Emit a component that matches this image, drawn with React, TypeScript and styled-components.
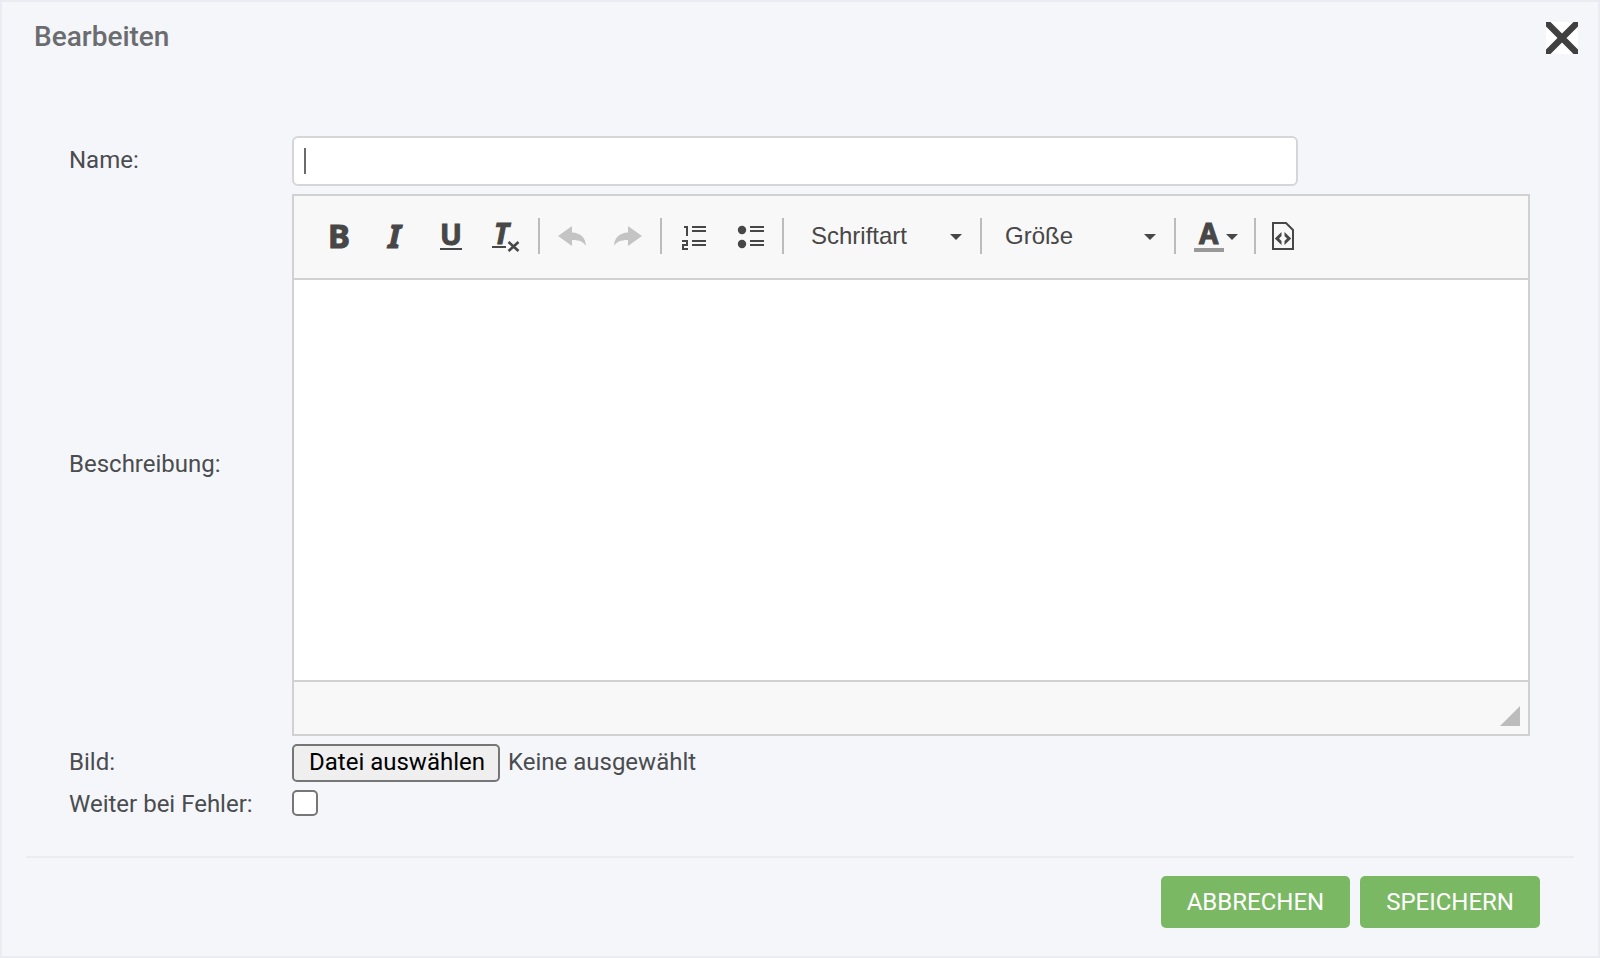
import React from "react";
import styled, { createGlobalStyle } from "styled-components";

const GlobalStyle = createGlobalStyle`
  *, *::before, *::after { box-sizing: border-box; }
  body { margin: 0; background: #f4f6fa; }
  body, button, input, textarea { font-family: Roboto, "Liberation Sans", sans-serif; }
`;

const Dialog = styled.form`
  display: flex;
  flex-direction: column;
  min-height: 100vh;
  padding: 0 24px 28px;
  border: 2px solid #ebecf1;
  background: #f4f6fa;
  color: #4b4c4f;
  font-size: 24px;
  line-height: 28px;
`;

const Header = styled.header`
  display: flex;
  justify-content: space-between;
  align-items: flex-start;
  padding: 20px 0 0 8px;
  margin-right: -4px;
`;

const Title = styled.h1`
  margin: 0;
  color: #6b6c6f;
  font-size: 28px;
  line-height: 30px;
  font-weight: 500;
`;

const CloseButton = styled.button`
  display: block;
  width: 32px;
  height: 32px;
  padding: 0;
  border: 0;
  background: #fff;
  cursor: pointer;
`;

const Fields = styled.div`
  display: grid;
  grid-template-columns: 223px minmax(0, 1fr);
  row-gap: 8px;
  align-items: center;
  padding: 82px 44px 36px 43px;
`;

const Label = styled.label`
  padding-bottom: 2px;
`;

const NameBox = styled.div`
  position: relative;
  width: calc(100% - 232px);
  height: 50px;
`;

const NameInput = styled.input`
  display: block;
  width: 100%;
  height: 100%;
  padding: 0 10px;
  border: 2px solid #d6d6d8;
  border-radius: 6px;
  background: #fff;
  color: #4b4c4f;
  font-size: 24px;
  outline: none;
`;

const Caret = styled.span`
  position: absolute;
  left: 12px;
  top: 12px;
  width: 2px;
  height: 26px;
  background: #6b6b6b;
  pointer-events: none;
`;

const Editor = styled.div`
  border: 2px solid #d1d1d1;
  background: #fff;
`;

const Toolbar = styled.div`
  display: flex;
  align-items: center;
  padding: 22px 16px 24px;
  border-bottom: 2px solid #d1d1d1;
  background: #f8f8f8;
`;

const ToolButton = styled.button<{ $pad?: number }>`
  display: block;
  height: 36px;
  padding: 0 ${(p) => p.$pad ?? 12}px;
  border: 0;
  background: none;
  color: #474747;
  cursor: pointer;

  &:disabled { color: #c4c4c4; cursor: default; }
  svg { display: block; overflow: visible; }
`;

const Separator = styled.span`
  width: 2px;
  height: 36px;
  margin: 0 4px;
  background: #bcbcbc;
`;

const Combo = styled.span<{ $width: number }>`
  display: grid;
  align-items: center;
  width: ${(p) => p.$width}px;
  color: #474747;

  > * { grid-area: 1 / 1; }
  svg { justify-self: end; margin: 2px 14px 0 0; pointer-events: none; }
`;

const ComboSelect = styled.select<{ $indent: number }>`
  width: 100%;
  height: 36px;
  padding: 0 32px 2px ${(p) => p.$indent}px;
  border: 0;
  appearance: none;
  background: none;
  color: #474747;
  font-family: "Liberation Sans", Arial, sans-serif;
  font-size: 24px;
`;

const TextArea = styled.textarea`
  display: block;
  width: 100%;
  height: 400px;
  padding: 20px;
  border: 0;
  outline: none;
  resize: none;
  background: #fff;
  color: #333;
  font-size: 24px;
`;

const StatusBar = styled.div`
  display: flex;
  justify-content: flex-end;
  align-items: flex-end;
  height: 54px;
  padding: 8px;
  border-top: 2px solid #d1d1d1;
  background: #f8f8f8;
  svg { display: block; }
`;

const FilePicker = styled.div`
  position: relative;
  display: flex;
  align-items: center;
  gap: 8px;
`;

const FileInput = styled.input`
  position: absolute;
  width: 1px;
  height: 1px;
  opacity: 0;
`;

const FileButton = styled.label`
  height: 38px;
  padding: 2px 13px 4px 15px;
  border: 2px solid #767676;
  border-radius: 5px;
  background: #efefef;
  color: #000;
  cursor: pointer;
`;

const FileName = styled.span`
  padding-bottom: 2px;
`;

const Checkbox = styled.input`
  display: block;
  align-self: start;
  width: 26px;
  height: 26px;
  margin: 0;
  border: 2px solid #767676;
  border-radius: 5px;
  appearance: none;
  background: #fff;

  &:checked { background: #7bb864; }
`;

const Footer = styled.footer`
  display: flex;
  justify-content: flex-end;
  gap: 10px;
  padding: 18px 34px 0 0;
  border-top: 2px solid #ebecf1;
`;

const ActionButton = styled.button`
  height: 52px;
  padding: 0 26px;
  border: 0;
  border-radius: 5px;
  background: #7bb864;
  color: #fff;
  font-size: 24px;
  line-height: 28px;
  text-transform: uppercase;
  cursor: pointer;
`;

const IconLetter = styled.text`
  font-family: "Noto Sans", "Open Sans", sans-serif;
  font-weight: 700;
  fill: currentColor;
  stroke: currentColor;
  stroke-width: 1px;
`;

function Icon({ width = 32, children }: { width?: number; children: React.ReactNode }) {
  return (
    <svg width={width} height="32" viewBox={`0 0 ${width} 32`} fill="currentColor" aria-hidden="true">
      {children}
    </svg>
  );
}

const UNDO_PATH = "M2 16 16 6v6.6C24.5 13 30 18 29.8 26 27.5 22 24 20 16 20v6Z";
const LIST_LINES = "h14v2h-14z";

function DropArrow() {
  return (
    <svg width="12" height="6" viewBox="0 0 12 6" fill="currentColor" aria-hidden="true">
      <path d="M0 0h12L6 6Z" />
    </svg>
  );
}

function FormatCombo(props: { label: string; width: number; indent: number }) {
  return (
    <Combo $width={props.width}>
      <ComboSelect $indent={props.indent} aria-label={props.label}>
        <option>{props.label}</option>
      </ComboSelect>
      <DropArrow />
    </Combo>
  );
}

function EditorToolbar() {
  return (
    <Toolbar role="toolbar" aria-label="Formatierung">
      <ToolButton type="button" aria-label="Fett">
        <Icon><IconLetter x="6" y="28" fontSize="33">B</IconLetter></Icon>
      </ToolButton>
      <ToolButton type="button" aria-label="Kursiv">
        <Icon><IconLetter x="10" y="28" fontSize="33" fontStyle="italic">I</IconLetter></Icon>
      </ToolButton>
      <ToolButton type="button" aria-label="Unterstrichen">
        <Icon>
          <IconLetter x="6" y="25" fontSize="29">U</IconLetter>
          <path d="M6 28h22v2H6z" />
        </Icon>
      </ToolButton>
      <ToolButton type="button" aria-label="Formatierung entfernen">
        <Icon>
          <IconLetter x="4" y="24" fontSize="28" fontStyle="italic">T</IconLetter>
          <path d="M2 26h14v2H2z" />
          <path d="m18.5 22 10 9m0-9-10 9" stroke="currentColor" strokeWidth="2.6" />
        </Icon>
      </ToolButton>
      <Separator />
      <ToolButton type="button" aria-label="Rückgängig" disabled>
        <Icon><path d={UNDO_PATH} /></Icon>
      </ToolButton>
      <ToolButton type="button" aria-label="Wiederherstellen" disabled>
        <Icon><path d={UNDO_PATH} transform="matrix(-1 0 0 1 32 0)" /></Icon>
      </ToolButton>
      <Separator />
      <ToolButton type="button" aria-label="Nummerierte Liste">
        <Icon>
          <path d="M6 7h3v9M4 21h5v4H5v4h5" fill="none" stroke="currentColor" strokeWidth="2" />
          {[6, 10, 20, 24].map((y) => <path key={y} d={`M14 ${y}${LIST_LINES}`} />)}
        </Icon>
      </ToolButton>
      <ToolButton type="button" aria-label="Liste">
        <Icon>
          <circle cx="8" cy="10" r="4.2" />
          <circle cx="8" cy="24" r="4.2" />
          {[6, 10, 20, 24].map((y) => <path key={y} d={`M16 ${y}${LIST_LINES}`} />)}
        </Icon>
      </ToolButton>
      <Separator />
      <FormatCombo label="Schriftart" width={188} indent={23} />
      <Separator />
      <FormatCombo label="Größe" width={184} indent={19} />
      <Separator />
      <ToolButton type="button" aria-label="Textfarbe">
        <Icon width={46}>
          <IconLetter x="7" y="24" fontSize="28">A</IconLetter>
          <path d="M2 28h30v4H2z" fill="#999" />
          <path d="M34 14h12l-6 6Z" />
        </Icon>
      </ToolButton>
      <Separator />
      <ToolButton type="button" aria-label="Quellcode" $pad={8}>
        <Icon>
          <path d="M5 3h13l7 7v19H5Z" fill="none" stroke="currentColor" strokeWidth="2" />
          <path d="m13.500 12-6.700 6.500 6.700 6.500v-4L11 18.500l2.500-2.500ZM16.500 12l6.700 6.500-6.700 6.500v-4l2.500-2.500-2.500-2.500Z" />
        </Icon>
      </ToolButton>
    </Toolbar>
  );
}

export default function App() {
  return (
    <>
      <GlobalStyle />
      <Dialog onSubmit={(e) => e.preventDefault()}>
        <Header>
          <Title>Bearbeiten</Title>
          <CloseButton type="button" aria-label="Schließen">
            <svg width="32" height="32" viewBox="0 0 32 32" display="block" aria-hidden="true">
              <path d="m2 2 28 28M30 2 2 30" stroke="#404040" strokeWidth="6.4" strokeLinecap="round" />
            </svg>
          </CloseButton>
        </Header>

        <Fields>
          <Label htmlFor="name">Name:</Label>
          <NameBox>
            <NameInput id="name" type="text" />
            <Caret />
          </NameBox>

          <Label htmlFor="description">Beschreibung:</Label>
          <Editor>
            <EditorToolbar />
            <TextArea id="description" />
            <StatusBar>
              <svg width="20" height="20" viewBox="0 0 20 20" aria-hidden="true">
                <path d="M20 0v20H0Z" fill="#bcbcbc" />
              </svg>
            </StatusBar>
          </Editor>

          <Label htmlFor="image">Bild:</Label>
          <FilePicker>
            <FileInput id="image" type="file" />
            <FileButton htmlFor="image">Datei auswählen</FileButton>
            <FileName>Keine ausgewählt</FileName>
          </FilePicker>

          <Label htmlFor="continue">Weiter bei Fehler:</Label>
          <Checkbox id="continue" type="checkbox" />
        </Fields>

        <Footer>
          <ActionButton type="button">Abbrechen</ActionButton>
          <ActionButton type="submit">Speichern</ActionButton>
        </Footer>
      </Dialog>
    </>
  );
}
